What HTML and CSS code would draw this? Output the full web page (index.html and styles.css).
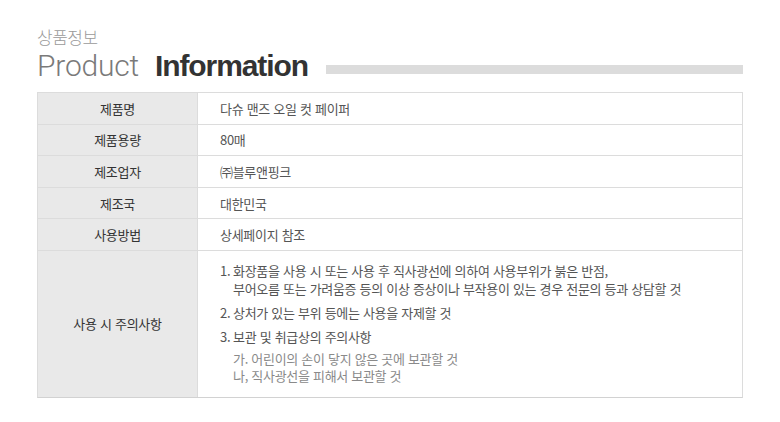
FILE: index.html
```html
<!DOCTYPE html>
<html lang="ko">
<head>
<meta charset="utf-8">
<link rel="stylesheet" href="styles.css">
</head>
<body>
<div class="page">
  <div class="title">
    <div class="title-ko">상품정보</div>
    <div class="title-en">
      <span class="en-light">Product</span>
      <span class="en-bold">Information</span>
      <span class="title-bar"></span>
    </div>
  </div>
  <div class="info">
    <div class="row"><div class="th">제품명</div><div class="td">다슈 맨즈 오일 컷 페이퍼</div></div>
    <div class="row"><div class="th">제품용량</div><div class="td">80매</div></div>
    <div class="row"><div class="th">제조업자</div><div class="td">㈜블루앤핑크</div></div>
    <div class="row"><div class="th">제조국</div><div class="td">대한민국</div></div>
    <div class="row"><div class="th">사용방법</div><div class="td">상세페이지 참조</div></div>
    <div class="row row-last">
      <div class="th">사용 시 주의사항</div>
      <div class="td td-list">
        <div class="item"><span class="num">1.</span><span class="item-text">화장품을 사용 시 또는 사용 후 직사광선에 의하여 사용부위가 붉은 반점,<br>부어오름 또는 가려움증 등의 이상 증상이나 부작용이 있는 경우 전문의 등과 상담할 것</span></div>
        <div class="item"><span class="num">2.</span><span class="item-text">상처가 있는 부위 등에는 사용을 자제할 것</span></div>
        <div class="item"><span class="num">3.</span><span class="item-text">보관 및 취급상의 주의사항</span></div>
        <div class="sub">
          <div>가. 어린이의 손이 닿지 않은 곳에 보관할 것</div>
          <div>나, 직사광선을 피해서 보관할 것</div>
        </div>
      </div>
    </div>
  </div>
</div>
</body>
</html>
```

FILE: styles.css
```css
html, body {
  margin: 0;
  padding: 0;
  background: #fff;
}
.page {
  padding: 27px 37px 0 37px;
  width: 706px;
  font-family: "Noto Sans CJK KR", "Noto Sans", sans-serif;
}
.title-ko {
  font-size: 17px;
  line-height: 20px;
  color: #9a9a9a;
  font-weight: 300;
  letter-spacing: -0.5px;
}
.title-en {
  display: flex;
  align-items: center;
  height: 38px;
  font-family: "Liberation Sans", Arial, sans-serif;
  font-size: 30px;
  line-height: 38px;
}
.en-light {
  font-family: Roboto, "Liberation Sans", sans-serif;
  font-weight: 300;
  color: #7a7a7a;
  letter-spacing: -0.2px;
}
.en-bold {
  color: #333;
  font-weight: bold;
  letter-spacing: -1.1px;
  margin-left: 16px;
}
.title-bar {
  flex: 1;
  height: 9px;
  background: #dcdcdc;
  margin-left: 18px;
  margin-top: 6px;
}
.info {
  margin-top: 7px;
  border: 1px solid #dcdcdc;
  border-bottom-color: #d2d2d2;
}
.row {
  display: grid;
  grid-template-columns: 160px 1fr;
  min-height: 30.6px;
  border-top: 1px solid #dcdcdc;
  font-size: 13px;
}
.row:first-child {
  border-top: none;
}
.th {
  background: #e9e9e9;
  color: #333;
  display: flex;
  align-items: center;
  justify-content: center;
  border-right: 1px solid #dcdcdc;
  letter-spacing: -0.3px;
}
.td {
  display: flex;
  align-items: center;
  padding-left: 22px;
  color: #555;
  letter-spacing: -0.3px;
}
.td-list {
  display: block;
  padding-top: 11px;
  padding-bottom: 12px;
}
.item {
  display: flex;
  line-height: 18px;
  margin-top: 6px;
}
.item:first-child {
  margin-top: 0;
}
.num {
  width: 13px;
  flex: none;
}
.sub {
  margin-top: 4px;
  padding-left: 13px;
  color: #8a8a8a;
  line-height: 17.5px;
}
```
